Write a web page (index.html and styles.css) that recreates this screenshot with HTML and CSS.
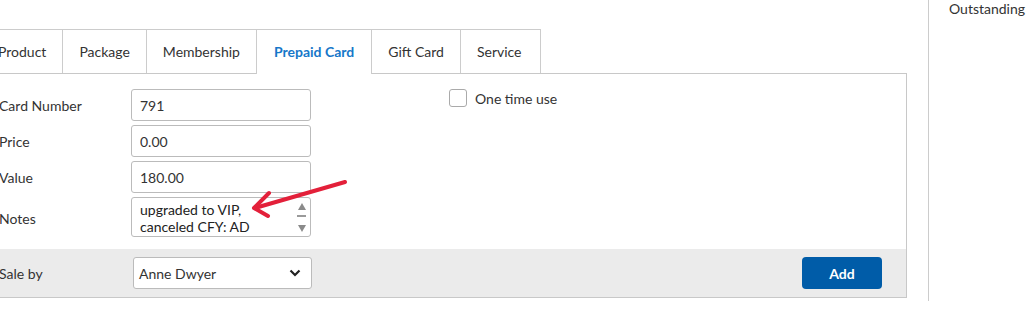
FILE: index.html
```html
<!DOCTYPE html>
<html lang="en">
<head>
  <meta charset="UTF-8" />
  <title>Sell Prepaid Card</title>
  <link rel="stylesheet" href="styles.css">
</head>
<body>
  <div class="page">
    <div class="main">
      <ul class="tabs">
        <li>Product</li>
        <li>Package</li>
        <li>Membership</li>
        <li class="active">Prepaid Card</li>
        <li>Gift Card</li>
        <li>Service</li>
      </ul>

      <div class="panel">
        <div class="panel-body">
          <div class="fields">
            <div class="row">
              <label>Card Number</label>
              <input type="text" value="791" />
            </div>
            <div class="row">
              <label>Price</label>
              <input type="text" value="0.00" />
            </div>
            <div class="row">
              <label>Value</label>
              <input type="text" value="180.00" />
            </div>
            <div class="row notes-row">
              <label>Notes</label>
              <div class="notes">
                <textarea>upgraded to VIP, canceled CFY: AD</textarea>
                <!-- scrollbar -->
                <span class="scroll-up"></span>
                <span class="scroll-thumb"></span>
                <span class="scroll-down"></span>
              </div>
            </div>
          </div>
          <div class="options">
            <label class="check"><span class="box"></span>One time use</label>
          </div>
        </div>

        <div class="panel-footer">
          <label>Sale by</label>
          <div class="select">
            <span>Anne Dwyer</span>
            <svg width="12" height="8" viewBox="0 0 12 8"><path d="M1.5 1.5 L6 6 L10.5 1.5" fill="none" stroke="#222" stroke-width="2.2"/></svg>
          </div>
          <button class="btn-add">Add</button>
        </div>
      </div>
    </div>

    <div class="sidebar">
      <div class="side-title">Outstanding</div>
    </div>
  </div>

  <!-- annotation arrow -->
  <svg class="annotation" width="1026" height="317" viewBox="0 0 1026 317">
    <g fill="none" stroke="#e3203a" stroke-width="4" stroke-linecap="round" stroke-linejoin="round">
      <path d="M345 182 L255 208" />
      <path d="M269 193 L254 208 L268 216" />
    </g>
  </svg>
</body>
</html>
```

FILE: styles.css
```css
body {
  margin: 0;
  font-family: Lato, "Open Sans", sans-serif;
  font-size: 14px;
  color: #333;
  background: #fff;
  overflow: hidden;
}
.page {
  display: flex;
  height: 317px;
}
.main {
  width: 926px;
  margin-left: -19px;
  padding-top: 29px;
  flex-shrink: 0;
}
.tabs {
  display: flex;
  list-style: none;
  margin: 0;
  padding: 0;
}
.tabs li {
  padding: 12px 16px 11px;
  line-height: 20px;
  border: 1px solid #ccc;
  border-bottom: none;
  margin-right: -1px;
  color: #333;
}
.tabs li:last-child {
  padding-right: 18px;
}
.tabs li.active {
  color: #1677c9;
  font-weight: bold;
  background: #fff;
  position: relative;
  z-index: 1;
  padding: 12px 17px;
  margin-bottom: -1px;
}
.panel {
  border: 1px solid #c8c8c8;
}
.panel-body {
  display: flex;
  padding: 15px 0 12px 17px;
}
.fields {
  display: flex;
  flex-direction: column;
  gap: 4px;
  width: 312px;
}
.row {
  display: flex;
  align-items: center;
}
.row label {
  width: 132px;
  flex-shrink: 0;
}
.row input {
  width: 180px;
  height: 32px;
  box-sizing: border-box;
  border: 1px solid #bbb;
  border-radius: 3px;
  padding: 0 8px;
  font-family: inherit;
  font-size: 14px;
  color: #333;
}
.notes-row label {
  padding-top: 2px;
}
.notes {
  position: relative;
  width: 180px;
  height: 40px;
}
.notes textarea {
  width: 180px;
  height: 40px;
  box-sizing: border-box;
  border: 1px solid #bbb;
  border-radius: 3px;
  padding: 4px 22px 0 8px;
  font-family: inherit;
  font-size: 14px;
  line-height: 16.5px;
  color: #222;
  resize: none;
  overflow: hidden;
}
.scroll-up, .scroll-down {
  position: absolute;
  right: 5px;
  width: 0;
  height: 0;
  border-left: 4.5px solid transparent;
  border-right: 4.5px solid transparent;
}
.scroll-up {
  top: 6px;
  border-bottom: 7px solid #8a8a8a;
}
.scroll-down {
  top: 28px;
  border-top: 7px solid #8a8a8a;
}
.scroll-thumb {
  position: absolute;
  right: 5px;
  top: 18px;
  width: 9px;
  height: 2px;
  background: #9a9a9a;
}
.options {
  padding-left: 138px;
}
.check {
  display: flex;
  align-items: center;
  gap: 8px;
  color: #333;
}
.box {
  width: 16px;
  height: 16px;
  border: 1px solid #aaa;
  border-radius: 3px;
  background: #fff;
}
.panel-footer {
  display: flex;
  align-items: center;
  background: #ebebeb;
  padding: 8px 24px 8px 17px;
}
.panel-footer label {
  width: 134px;
}
.select {
  width: 179px;
  height: 32px;
  box-sizing: border-box;
  display: flex;
  align-items: center;
  justify-content: space-between;
  padding: 0 10px 0 5px;
  background: #fff;
  border: 1px solid #bbb;
  border-radius: 3px;
  color: #333;
}
.btn-add {
  margin-left: auto;
  width: 80px;
  height: 32px;
  border: none;
  border-radius: 4px;
  background: #005ca8;
  color: #fff;
  font-family: inherit;
  font-size: 14px;
  font-weight: bold;
}
.sidebar {
  margin-left: 21px;
  height: 301px;
  border-left: 1px solid #ccc;
  padding-left: 20px;
}
.side-title {
  line-height: 18px;
  color: #333;
}
.annotation {
  position: absolute;
  left: 0;
  top: 0;
  pointer-events: none;
}
```
